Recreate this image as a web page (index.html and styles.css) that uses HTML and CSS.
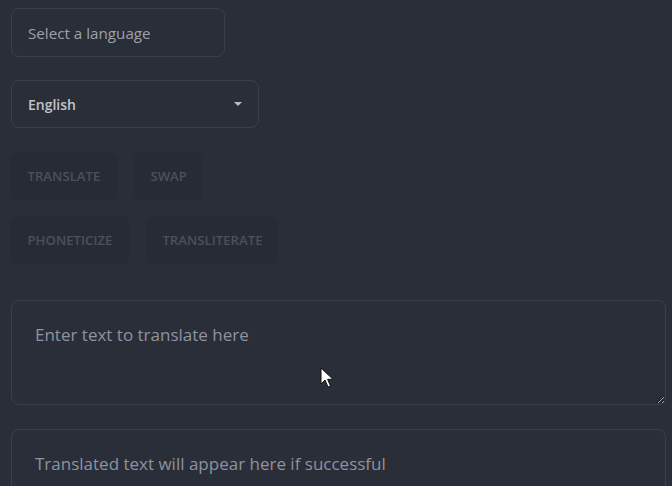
FILE: index.html
```html
<!DOCTYPE html>
<html lang="en">
<head>
<meta charset="utf-8">
<title>Translator</title>
<link rel="stylesheet" href="styles.css">
</head>
<body>
<main class="app">
  <div class="field lang-input">Select a language</div>
  <div class="field lang-select">
    <span>English</span>
    <span class="caret"></span>
  </div>
  <div class="btn-row">
    <button class="btn">Translate</button>
    <button class="btn">Swap</button>
  </div>
  <div class="btn-row">
    <button class="btn">Phoneticize</button>
    <button class="btn">Transliterate</button>
  </div>
  <textarea class="text-in" placeholder="Enter text to translate here"></textarea>
  <div class="text-out">Translated text will appear here if successful</div>
</main>
<svg class="cursor" width="14" height="22" viewBox="0 0 14 22" aria-hidden="true">
  <path d="M1 1 L1 17 L5 13 L8 20 L10.5 19 L7.6 12.3 L13 12.3 Z" fill="#fff" stroke="#111" stroke-width="1"/>
</svg>
</body>
</html>
```
FILE: styles.css
```css
html, body {
  margin: 0;
  background: #2a2e39;
  font-family: "Open Sans", "Noto Sans", sans-serif;
}
body {
  padding: 8px 6px 0 11px;
  height: 486px;
  box-sizing: border-box;
  overflow: hidden;
  position: relative;
}
.app {
  display: flex;
  flex-direction: column;
  align-items: flex-start;
}
.field {
  box-sizing: border-box;
  border: 1px solid #3a3f4b;
  border-radius: 8px;
  display: flex;
  align-items: center;
  padding: 0 16px;
}
.lang-input {
  width: 214px;
  height: 49px;
  color: #9ca1ac;
  font-size: 15.2px;
}
.lang-select {
  margin-top: 23px;
  width: 248px;
  height: 48px;
  color: #c0c4cc;
  font-size: 14px;
  font-weight: 600;
  justify-content: space-between;
  padding-right: 16px;
}
.caret {
  width: 0;
  height: 0;
  border-left: 4px solid transparent;
  border-right: 4px solid transparent;
  border-top: 4px solid #b9bdc6;
}
.btn-row {
  display: flex;
  gap: 17px;
  margin-top: 16px;
}
.lang-select + .btn-row { margin-top: 24px; }
.btn {
  height: 48px;
  padding: 0 16.5px;
  border: none;
  border-radius: 8px;
  background: #272b35;
  color: #4b505c;
  font-family: inherit;
  font-size: 13.2px;
  font-weight: 600;
  text-transform: uppercase;
}
.text-in, .text-out {
  box-sizing: border-box;
  width: 655px;
  border: 1px solid #3a3f4b;
  border-radius: 8px;
  background: transparent;
  font-family: inherit;
  font-size: 17px;
  padding: 22px 23px;
  line-height: 24px;
}
.text-in {
  margin-top: 36px;
  height: 105px;
  color: #c3c7cf;
  resize: vertical;
  outline: none;
  color-scheme: dark;
}
.text-in::placeholder {
  color: #8e939e;
}
.text-out {
  margin-top: 24px;
  height: 80px;
  color: #8e939e;
}
.cursor {
  position: absolute;
  left: 320px;
  top: 367px;
}
```
